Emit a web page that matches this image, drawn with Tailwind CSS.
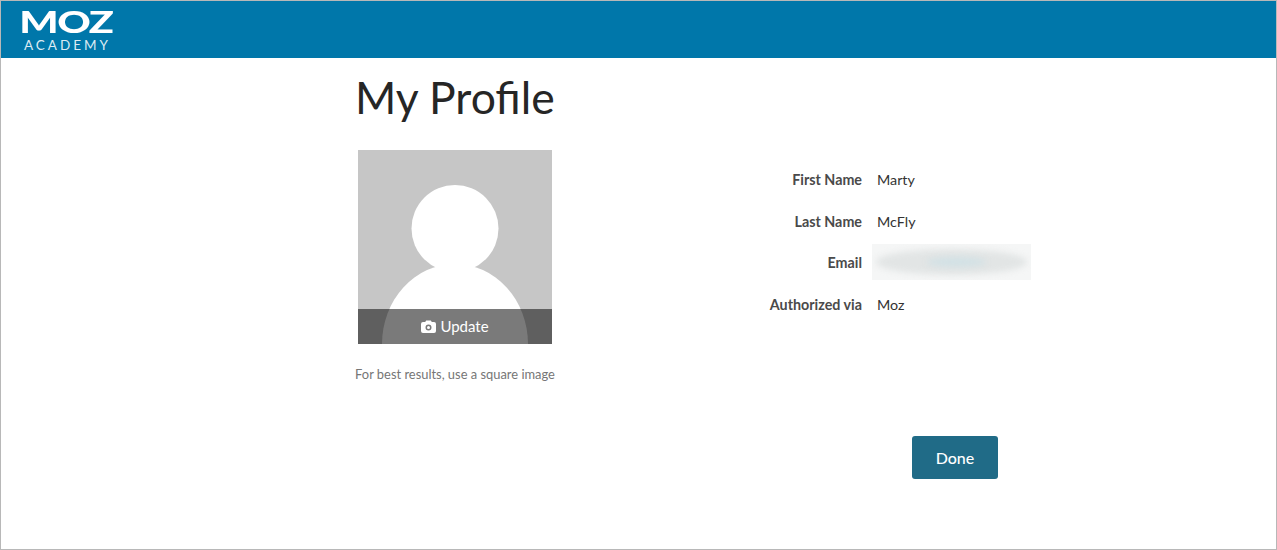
<!DOCTYPE html>
<html lang="en">
<head>
<meta charset="utf-8">
<title>My Profile</title>
<script src="https://cdn.jsdelivr.net/npm/@tailwindcss/browser@4"></script>
</head>
<body class="m-0 bg-white overflow-hidden">
<div class="h-[550px] w-[1277px] border border-[#b8b8b8] flex flex-col font-['Lato',sans-serif] text-[#333]">
  <header class="h-[57px] bg-[#0077aa] shrink-0 pl-[20px] pt-[7px]">
    <div class="w-[93px] flex flex-col items-center text-white">
      <span class="block mr-[4px] h-[26px] leading-[26px] text-[30px] font-black origin-center scale-x-[1.38] tracking-[-1px]">MOZ</span>
      <span class="block mt-[4px] text-[13.5px] leading-[14px] tracking-[3px] text-[#dcebf3]">ACADEMY</span>
    </div>
  </header>
  <main class="flex flex-1 pl-[354px]">
    <section class="w-[200px] shrink-0">
      <h1 class="text-[44.5px] leading-[53px] pt-[12px] font-normal text-[#262626] whitespace-nowrap">My Profile</h1>
      <div class="relative w-[194px] h-[194px] ml-[3px] mt-[27px] bg-[#c6c6c6] overflow-hidden">
        <svg class="block" width="194" height="194" viewBox="0 0 194 194" aria-hidden="true">
          <circle cx="97" cy="78.5" r="43.5" fill="#fff"/>
          <ellipse cx="97" cy="194" rx="73" ry="80" fill="#fff"/>
        </svg>
        <div class="absolute left-0 right-0 bottom-0 h-[35px] bg-black/52 flex items-center justify-center gap-[4px] text-white text-[15px]">
          <svg width="15" height="13" viewBox="0 0 15 13" aria-hidden="true">
            <path fill="#fff" fill-rule="evenodd" d="M2 2h2.2L5.2.5h4.6L10.8 2H13a2 2 0 0 1 2 2v7a2 2 0 0 1-2 2H2a2 2 0 0 1-2-2V4a2 2 0 0 1 2-2Zm5.5 2.6a3 3 0 1 0 0 6 3 3 0 0 0 0-6Zm0 1.5a1.5 1.5 0 1 1 0 3 1.5 1.5 0 0 1 0-3Z"/>
          </svg>
          <span>Update</span>
        </div>
      </div>
      <p class="mt-[22px] text-[12.9px] leading-[17px] text-[#767676] text-center whitespace-nowrap">For best results, use a square image</p>
    </section>
    <section class="ml-[200px] flex-1 pt-[101px]">
      <dl class="text-[14.3px] leading-[20px]">
        <div class="flex h-[42px] items-center">
          <dt class="w-[107px] text-right font-bold text-[#4a4a4a] whitespace-nowrap">First Name</dt>
          <dd class="ml-[15px]">Marty</dd>
        </div>
        <div class="flex h-[42px] items-center">
          <dt class="w-[107px] text-right font-bold text-[#4a4a4a] whitespace-nowrap">Last Name</dt>
          <dd class="ml-[15px]">McFly</dd>
        </div>
        <div class="flex h-[40px] items-center">
          <dt class="w-[107px] text-right font-bold text-[#4a4a4a] whitespace-nowrap">Email</dt>
          <dd class="ml-[10px] mb-[2px] w-[159px] h-[36px] relative overflow-hidden bg-[#f5f6f6]">
            <div class="absolute left-[4px] right-[4px] top-[5px] bottom-[5px] rounded-[50%] bg-[#e2e5e5] blur-[3px]"></div>
            <div class="absolute left-[55px] right-[45px] top-[13px] h-[10px] rounded-[50%] bg-[#d2e1e5] blur-[3px]"></div>
          </dd>
        </div>
        <div class="flex h-[44px] items-center">
          <dt class="w-[107px] text-right font-bold text-[#4a4a4a] whitespace-nowrap">Authorized via</dt>
          <dd class="ml-[15px]">Moz</dd>
        </div>
      </dl>
      <button class="block ml-[157px] mt-[109px] w-[86px] h-[43px] rounded-[3px] bg-[#206b87] text-white text-[16px] font-medium">Done</button>
    </section>
  </main>
</div>
</body>
</html>
